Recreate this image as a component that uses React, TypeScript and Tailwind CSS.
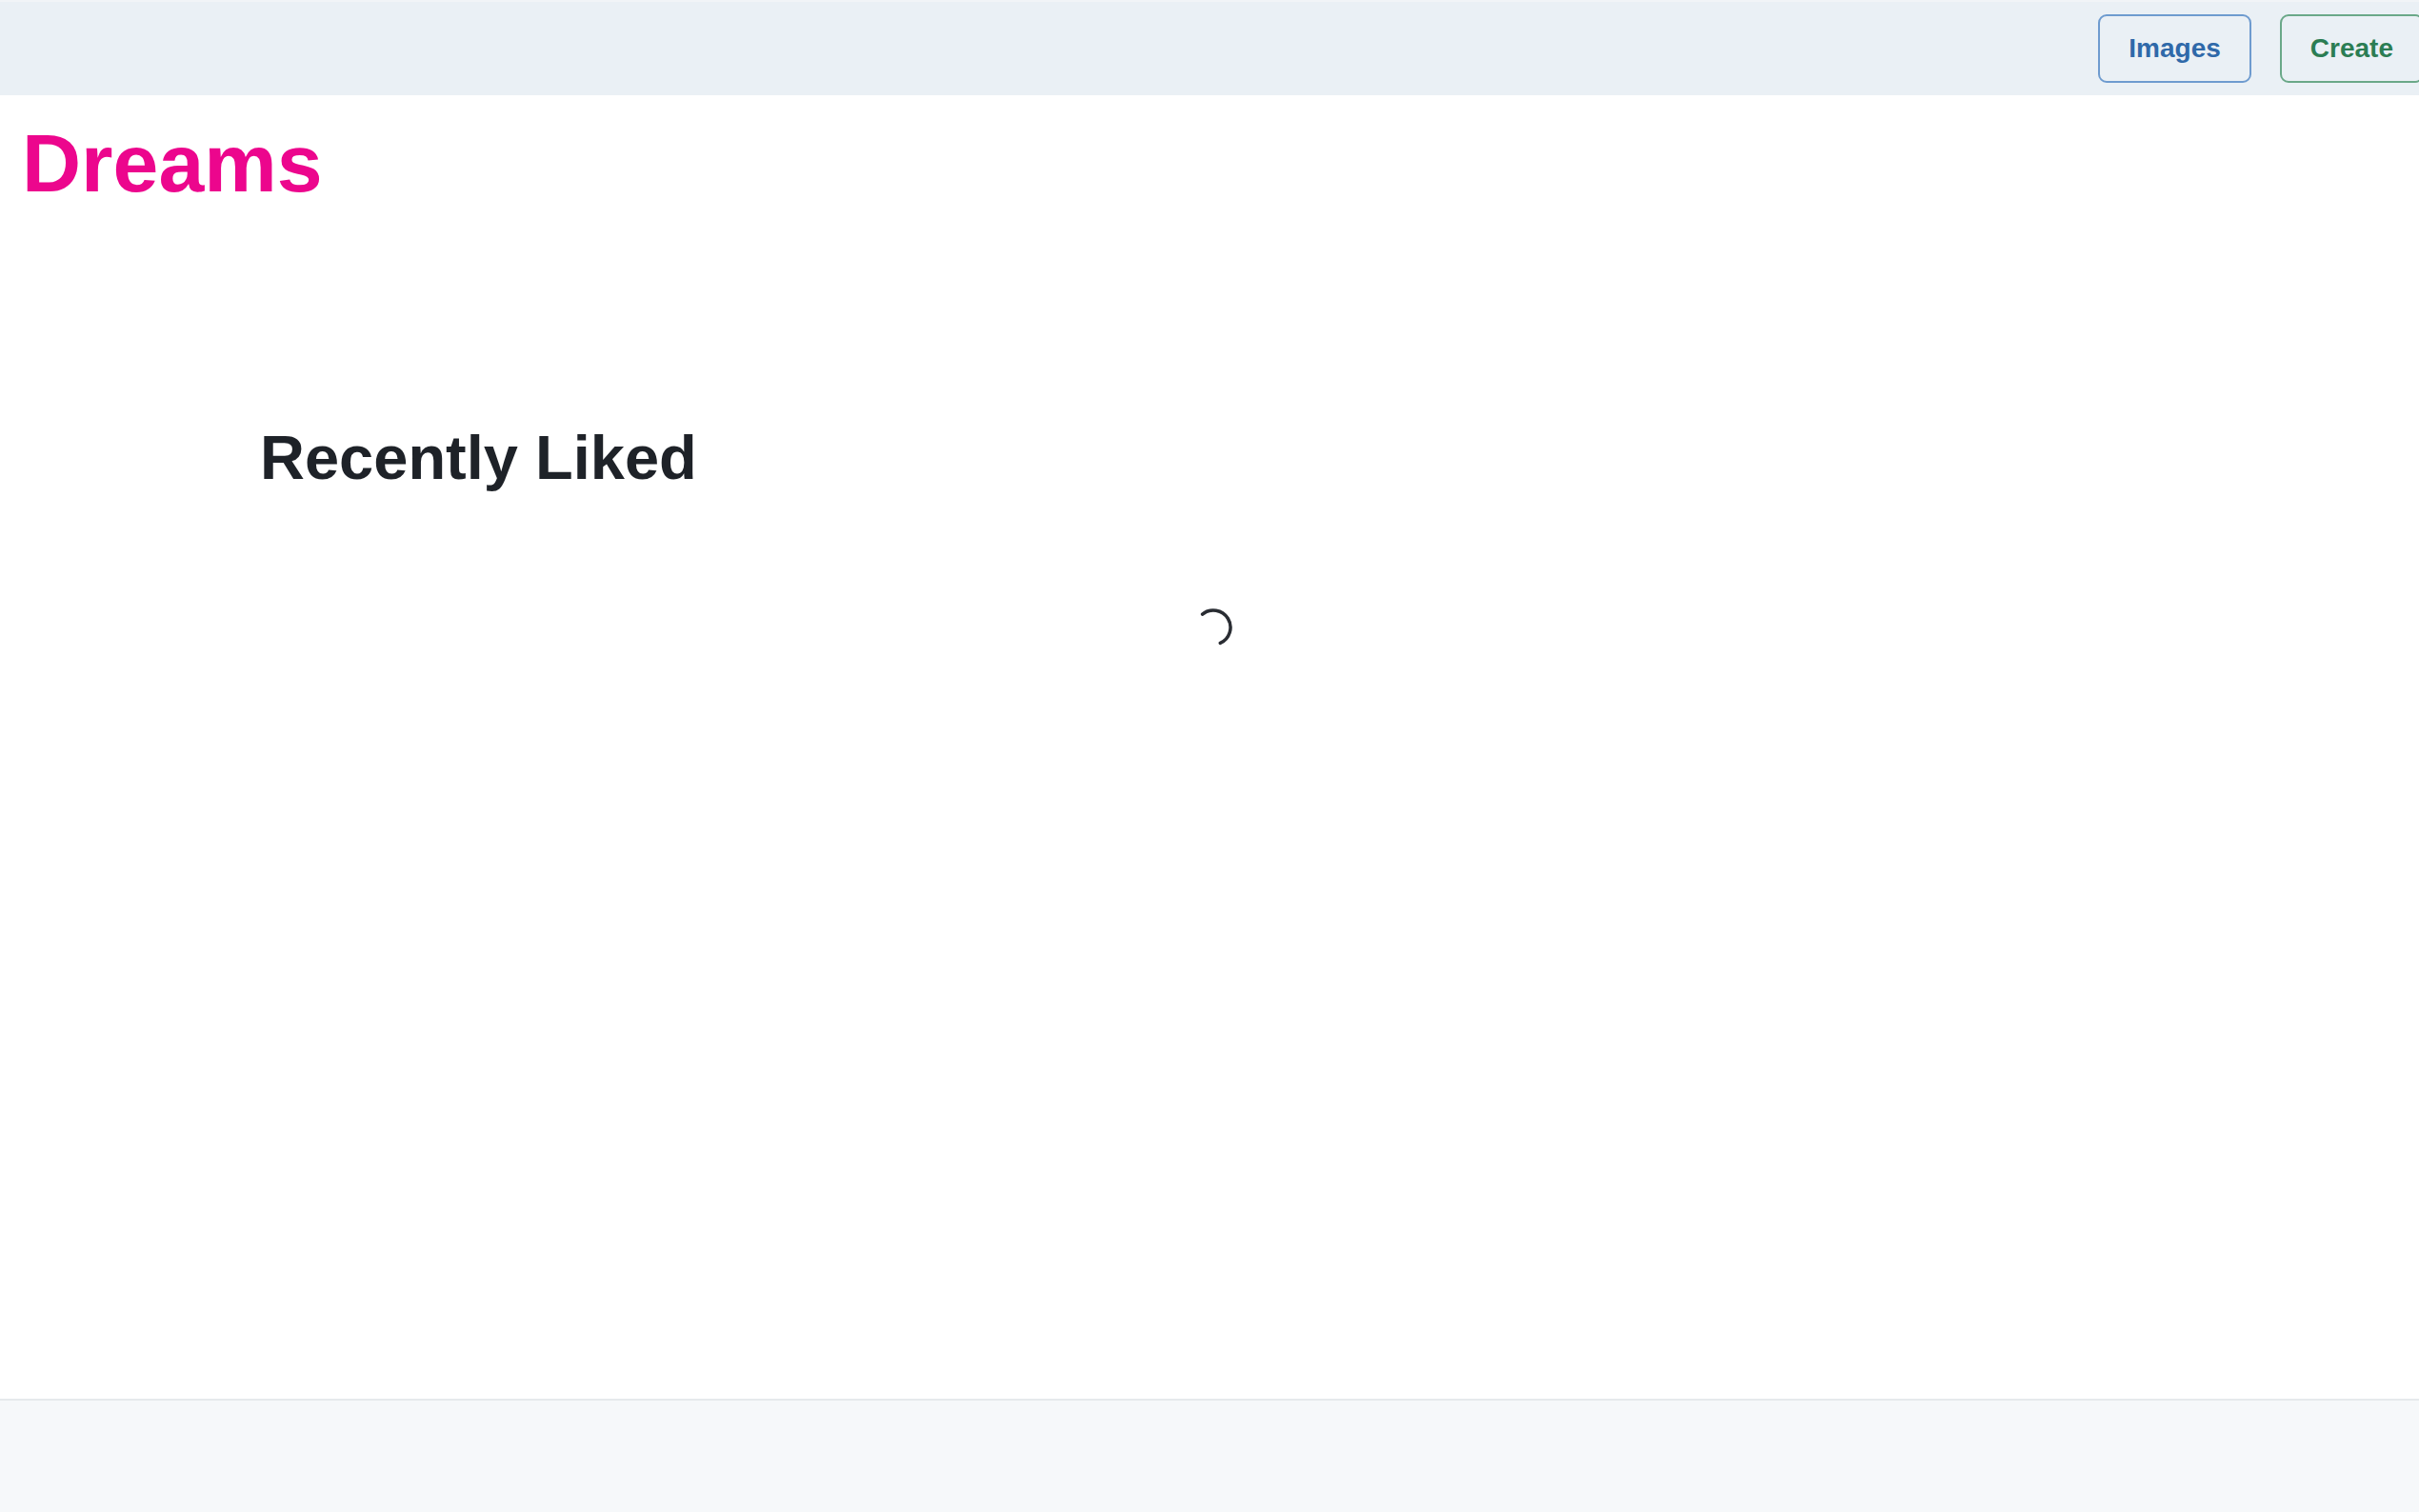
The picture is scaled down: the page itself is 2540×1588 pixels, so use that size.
export default function App() {
  return (
    <div className="flex min-h-screen flex-col bg-white font-['Liberation_Sans',Arial,sans-serif]">
      <nav className="flex h-[100px] items-center justify-end gap-[30px] overflow-hidden border-t-2 border-[#f1f4f7] bg-[#eaf0f5]">
        <button className="h-[72px] rounded-[9px] border-2 border-[#6e9bcf] px-[30px] text-[28px] font-bold text-[#2f69a9]">
          Images
        </button>
        <button className="-mr-[5px] h-[72px] shrink-0 rounded-[9px] border-2 border-[#6aa888] px-[30px] text-[28px] font-bold text-[#2b7d53]">
          Create
        </button>
      </nav>

      <main className="flex-1">
        <h1 className="mt-[28px] pl-[23px] text-[86px] leading-none font-bold text-[#ec068d]">Dreams</h1>

        <section className="mt-[234px]">
          <h2 className="pl-[273px] text-[65px] leading-none font-bold text-[#1e2228]">Recently Liked</h2>
          <div className="mt-[122px] flex justify-center">
            <svg width="48" height="48" viewBox="0 0 48 48" className="ml-[8px]">
              <path
                d="M12.55 10.11 A18 18 0 1 1 31.32 40.44"
                fill="none"
                stroke="#2a2d33"
                strokeWidth="3.5"
                strokeLinecap="round"
              />
            </svg>
          </div>
        </section>
      </main>

      <footer className="h-[119px] border-t-2 border-[#e6e9ec] bg-[#f6f8fa]" />
    </div>
  )
}
